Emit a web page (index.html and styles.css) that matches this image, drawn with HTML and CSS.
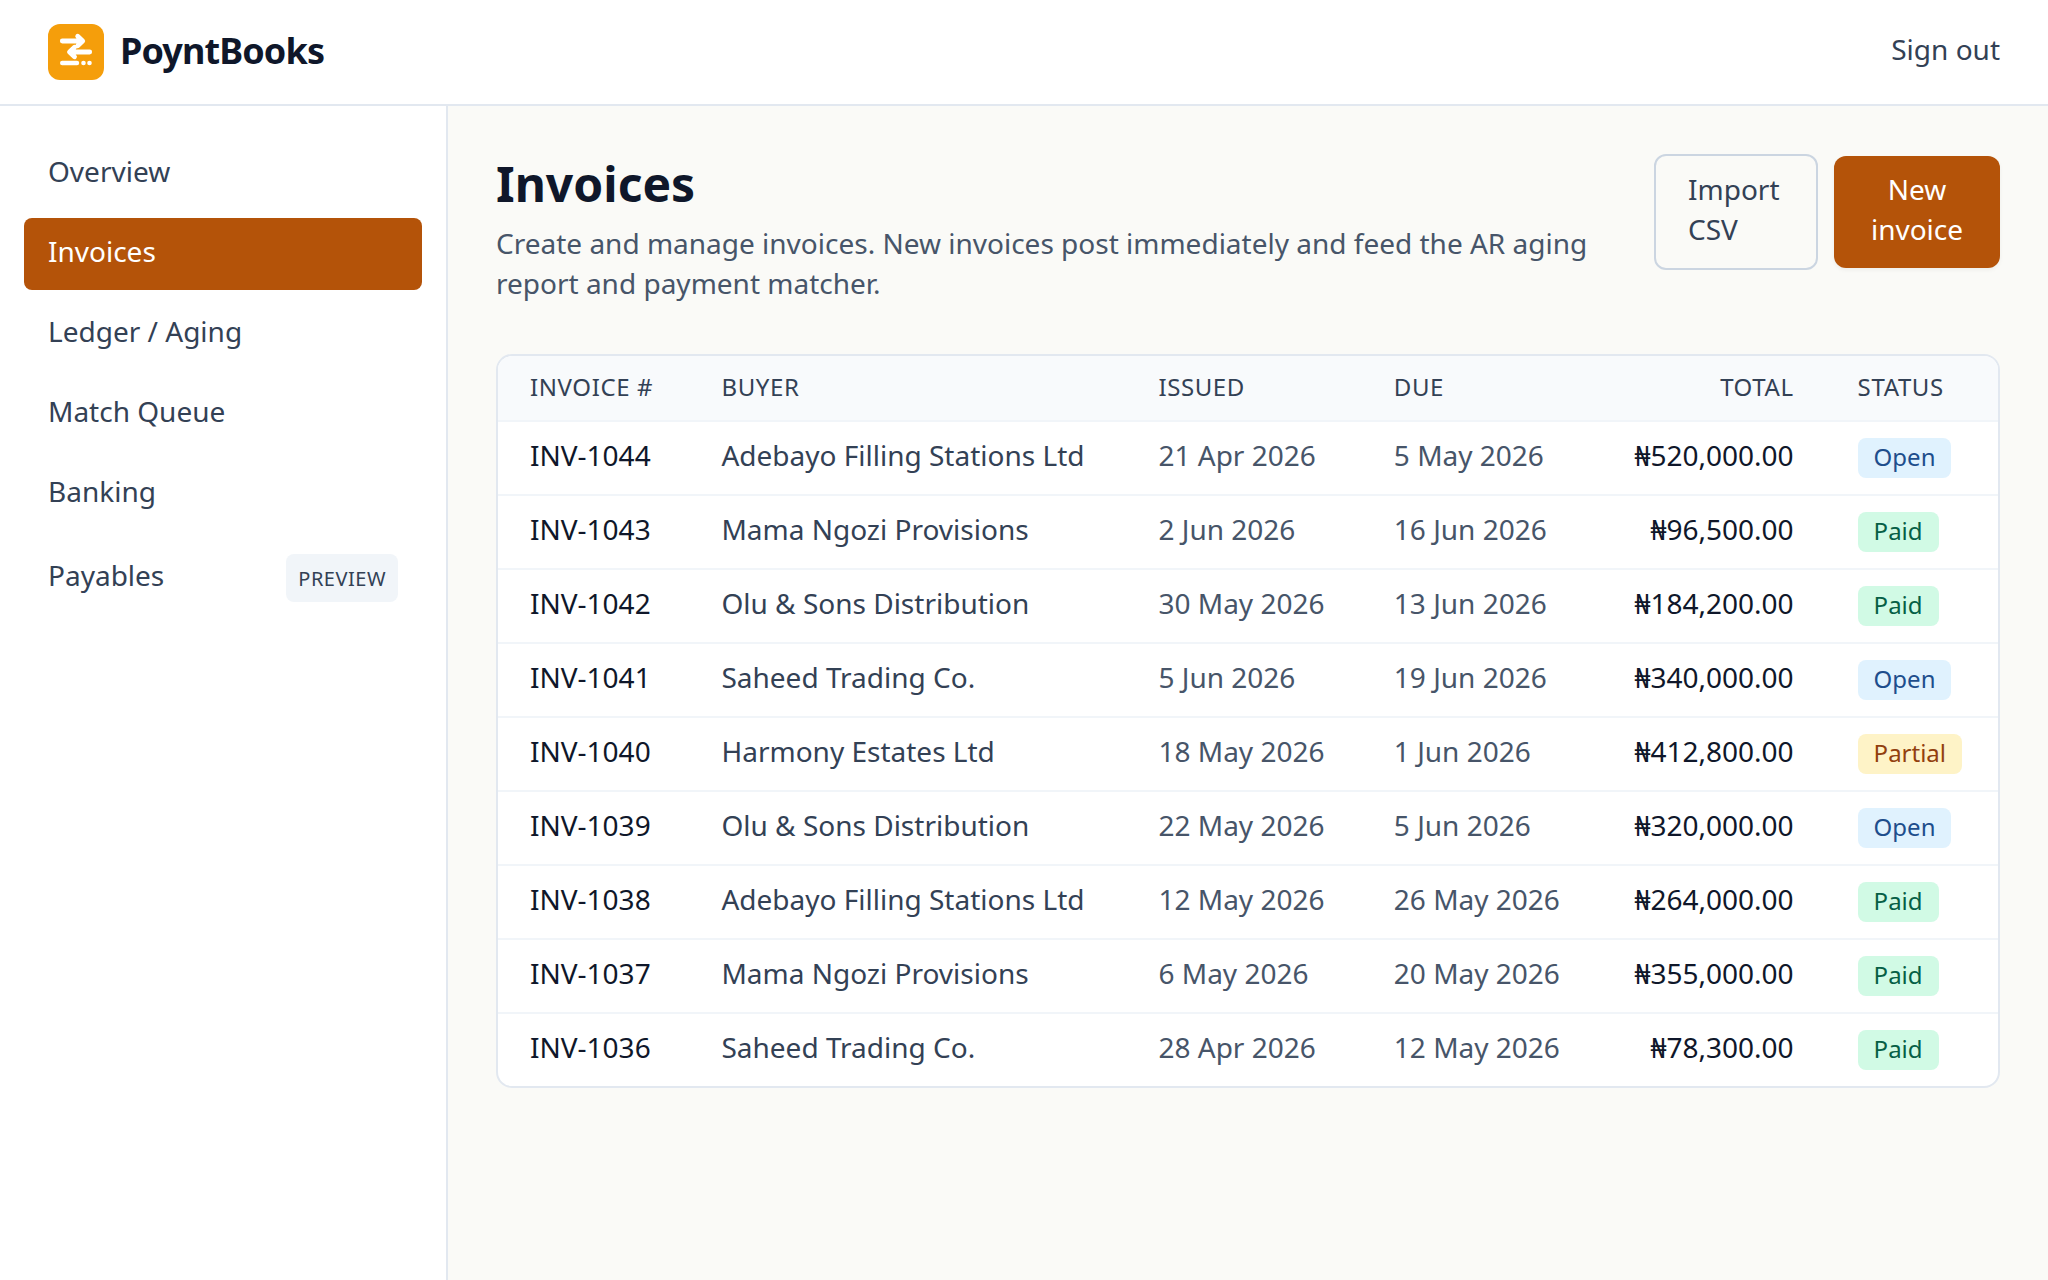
FILE: index.html
```
<!DOCTYPE html>
<html lang="en">
<head>
    <meta charset="UTF-8">
    <meta name="viewport" content="width=device-width, initial-scale=1.0">
    <title>Invoices - PoyntBooks</title>
    <link rel="stylesheet" href="styles.css">
</head>
<body>
    <header class="topbar">
        <a class="brand">
            <svg class="logo" viewBox="0 0 56 56" fill="none" stroke="#fff" stroke-linecap="round" stroke-linejoin="round">
                <rect width="56" height="56" rx="12" fill="#f59e0b" stroke="none"/>
                <path d="M14.3 17H34M29.7 12.2l5 4.8-5 4.8M41.7 28H22M26.5 23.2L21.5 28l5 4.8" stroke-width="4.8"/>
                <path d="M14.2 39H29" stroke-width="4.4"/>
                <circle cx="35.5" cy="39" r="2.3" fill="#fff" stroke="none"/>
                <circle cx="41.5" cy="39" r="2.3" fill="#fff" stroke="none"/>
            </svg>
            <span class="brand-name">PoyntBooks</span>
        </a>
        <a class="sign-out">Sign out</a>
    </header>

    <div class="layout">
        <nav class="sidebar">
            <a class="nav-item">Overview</a>
            <a class="nav-item active">Invoices</a>
            <a class="nav-item">Ledger / Aging</a>
            <a class="nav-item">Match Queue</a>
            <a class="nav-item">Banking</a>
            <a class="nav-item has-tag"><span class="nav-label">Payables</span> <span class="preview-tag">Preview</span></a>
        </nav>

        <main class="content">
            <div class="page-header">
                <div class="page-intro">
                    <h1>Invoices</h1>
                    <p>Create and manage invoices. New invoices post immediately and feed the AR aging report and payment matcher.</p>
                </div>
                <div class="actions">
                    <a class="btn btn-outline">Import CSV</a>
                    <button class="btn btn-primary">New invoice</button>
                </div>
            </div>

            <div class="card">
                <table>
                    <thead>
                        <tr>
                            <th>Invoice #</th>
                            <th>Buyer</th>
                            <th>Issued</th>
                            <th>Due</th>
                            <th class="total">Total</th>
                            <th>Status</th>
                        </tr>
                    </thead>
                    <tbody>
                        <tr>
                            <td class="number">INV-1044</td>
                            <td>Adebayo Filling Stations Ltd</td>
                            <td class="date">21 Apr 2026</td>
                            <td class="date">5 May 2026</td>
                            <td class="total">₦520,000.00</td>
                            <td class="status"><span class="badge open">Open</span></td>
                        </tr>
                        <tr>
                            <td class="number">INV-1043</td>
                            <td>Mama Ngozi Provisions</td>
                            <td class="date">2 Jun 2026</td>
                            <td class="date">16 Jun 2026</td>
                            <td class="total">₦96,500.00</td>
                            <td class="status"><span class="badge paid">Paid</span></td>
                        </tr>
                        <tr>
                            <td class="number">INV-1042</td>
                            <td>Olu &amp; Sons Distribution</td>
                            <td class="date">30 May 2026</td>
                            <td class="date">13 Jun 2026</td>
                            <td class="total">₦184,200.00</td>
                            <td class="status"><span class="badge paid">Paid</span></td>
                        </tr>
                        <tr>
                            <td class="number">INV-1041</td>
                            <td>Saheed Trading Co.</td>
                            <td class="date">5 Jun 2026</td>
                            <td class="date">19 Jun 2026</td>
                            <td class="total">₦340,000.00</td>
                            <td class="status"><span class="badge open">Open</span></td>
                        </tr>
                        <tr>
                            <td class="number">INV-1040</td>
                            <td>Harmony Estates Ltd</td>
                            <td class="date">18 May 2026</td>
                            <td class="date">1 Jun 2026</td>
                            <td class="total">₦412,800.00</td>
                            <td class="status"><span class="badge partial">Partial</span></td>
                        </tr>
                        <tr>
                            <td class="number">INV-1039</td>
                            <td>Olu &amp; Sons Distribution</td>
                            <td class="date">22 May 2026</td>
                            <td class="date">5 Jun 2026</td>
                            <td class="total">₦320,000.00</td>
                            <td class="status"><span class="badge open">Open</span></td>
                        </tr>
                        <tr>
                            <td class="number">INV-1038</td>
                            <td>Adebayo Filling Stations Ltd</td>
                            <td class="date">12 May 2026</td>
                            <td class="date">26 May 2026</td>
                            <td class="total">₦264,000.00</td>
                            <td class="status"><span class="badge paid">Paid</span></td>
                        </tr>
                        <tr>
                            <td class="number">INV-1037</td>
                            <td>Mama Ngozi Provisions</td>
                            <td class="date">6 May 2026</td>
                            <td class="date">20 May 2026</td>
                            <td class="total">₦355,000.00</td>
                            <td class="status"><span class="badge paid">Paid</span></td>
                        </tr>
                        <tr>
                            <td class="number">INV-1036</td>
                            <td>Saheed Trading Co.</td>
                            <td class="date">28 Apr 2026</td>
                            <td class="date">12 May 2026</td>
                            <td class="total">₦78,300.00</td>
                            <td class="status"><span class="badge paid">Paid</span></td>
                        </tr>
                    </tbody>
                </table>
            </div>
        </main>
    </div>
</body>
</html>
```
FILE: styles.css
```
:root {
    --ink: #0f172a;
    --text: #334155;
    --muted: #475569;
    --line: #e2e8f0;
    --line-soft: #f1f5f9;
    --accent: #b45309;
}

* {
    margin: 0;
    padding: 0;
    box-sizing: border-box;
}

body {
    min-height: 100vh;
    display: flex;
    flex-direction: column;
    background: #fafaf7;
    color: var(--text);
    font-family: 'Noto Sans', sans-serif;
    font-size: 28px;
    line-height: 40px;
}

.topbar {
    display: flex;
    align-items: center;
    justify-content: space-between;
    padding: 24px 48px;
    background: #fff;
    border-bottom: 2px solid var(--line);
}

.brand {
    display: flex;
    align-items: center;
    gap: 16px;
}

.logo {
    width: 56px;
    height: 56px;
}

.brand-name {
    padding-bottom: 2px;
    color: var(--ink);
    font-size: 36px;
    line-height: 54px;
    font-weight: 700;
    letter-spacing: -0.025em;
}

.sign-out {
    padding-bottom: 6px;
}

.layout {
    flex: 1;
    display: flex;
}

/* Sidebar */
.sidebar {
    width: 448px;
    flex-shrink: 0;
    display: flex;
    flex-direction: column;
    gap: 8px;
    padding: 32px 24px;
    background: #fff;
    border-right: 2px solid var(--line);
}

.nav-item {
    display: flex;
    align-items: center;
    justify-content: space-between;
    padding: 13px 24px 19px;
    border-radius: 8px;
}

.nav-item.active {
    background: var(--accent);
    color: #fff;
}

.nav-item.has-tag {
    padding: 16px 24px;
}

.nav-label {
    padding-bottom: 6px;
}

.preview-tag {
    padding: 5px 12px 3px;
    border-radius: 8px;
    background: var(--line-soft);
    font-size: 20px;
    letter-spacing: 0.025em;
    text-transform: uppercase;
}

/* Page header */
.content {
    flex: 1;
    padding: 48px;
}

.page-header {
    display: flex;
    align-items: flex-start;
    justify-content: space-between;
    margin-bottom: 51px;
}

.page-intro {
    width: 1110px;
}

h1 {
    margin-bottom: 10px;
    color: var(--ink);
    font-size: 48px;
    line-height: 59px;
    font-weight: 700;
}

.page-intro p {
    color: var(--muted);
}

.actions {
    display: flex;
    align-items: center;
    gap: 16px;
}

.btn {
    padding: 13px 32px 19px;
    border: none;
    border-radius: 12px;
    font: inherit;
}

.btn-outline {
    width: 164px;
    border: 2px solid #cbd5e1;
}

.btn-primary {
    width: 166px;
    background: var(--accent);
    color: #fff;
    box-shadow: 0 2px 4px rgba(0, 0, 0, 0.05);
}

/* Invoice table */
.card {
    overflow: hidden;
    background: #fff;
    border: 2px solid var(--line);
    border-radius: 16px;
}

table {
    width: 100%;
    border-collapse: separate;
    border-spacing: 0;
}

th {
    padding: 15px 32px 17px;
    background: #f8fafc;
    border-bottom: 2px solid var(--line-soft);
    font-size: 24px;
    line-height: 32px;
    font-weight: 400;
    letter-spacing: 0.025em;
    text-align: left;
    text-transform: uppercase;
}

td {
    padding: 13px 32px 19px;
    border-bottom: 2px solid var(--line-soft);
    white-space: nowrap;
}

tr:last-child td {
    border-bottom: none;
}

.number {
    color: var(--ink);
}

.date {
    color: var(--muted);
}

.total {
    text-align: right;
}

td.total {
    color: var(--ink);
    font-variant-numeric: tabular-nums;
}

td.status {
    padding: 16px 32px;
}

.badge {
    display: block;
    width: fit-content;
    padding: 3px 16px 5px;
    border-radius: 8px;
    font-size: 24px;
    line-height: 32px;
}

.open { background: #e0f2fe; color: #1e4e8c; }
.paid { background: #d1fae5; color: #065f46; }
.partial { background: #fef3c7; color: #92400e; }
```
